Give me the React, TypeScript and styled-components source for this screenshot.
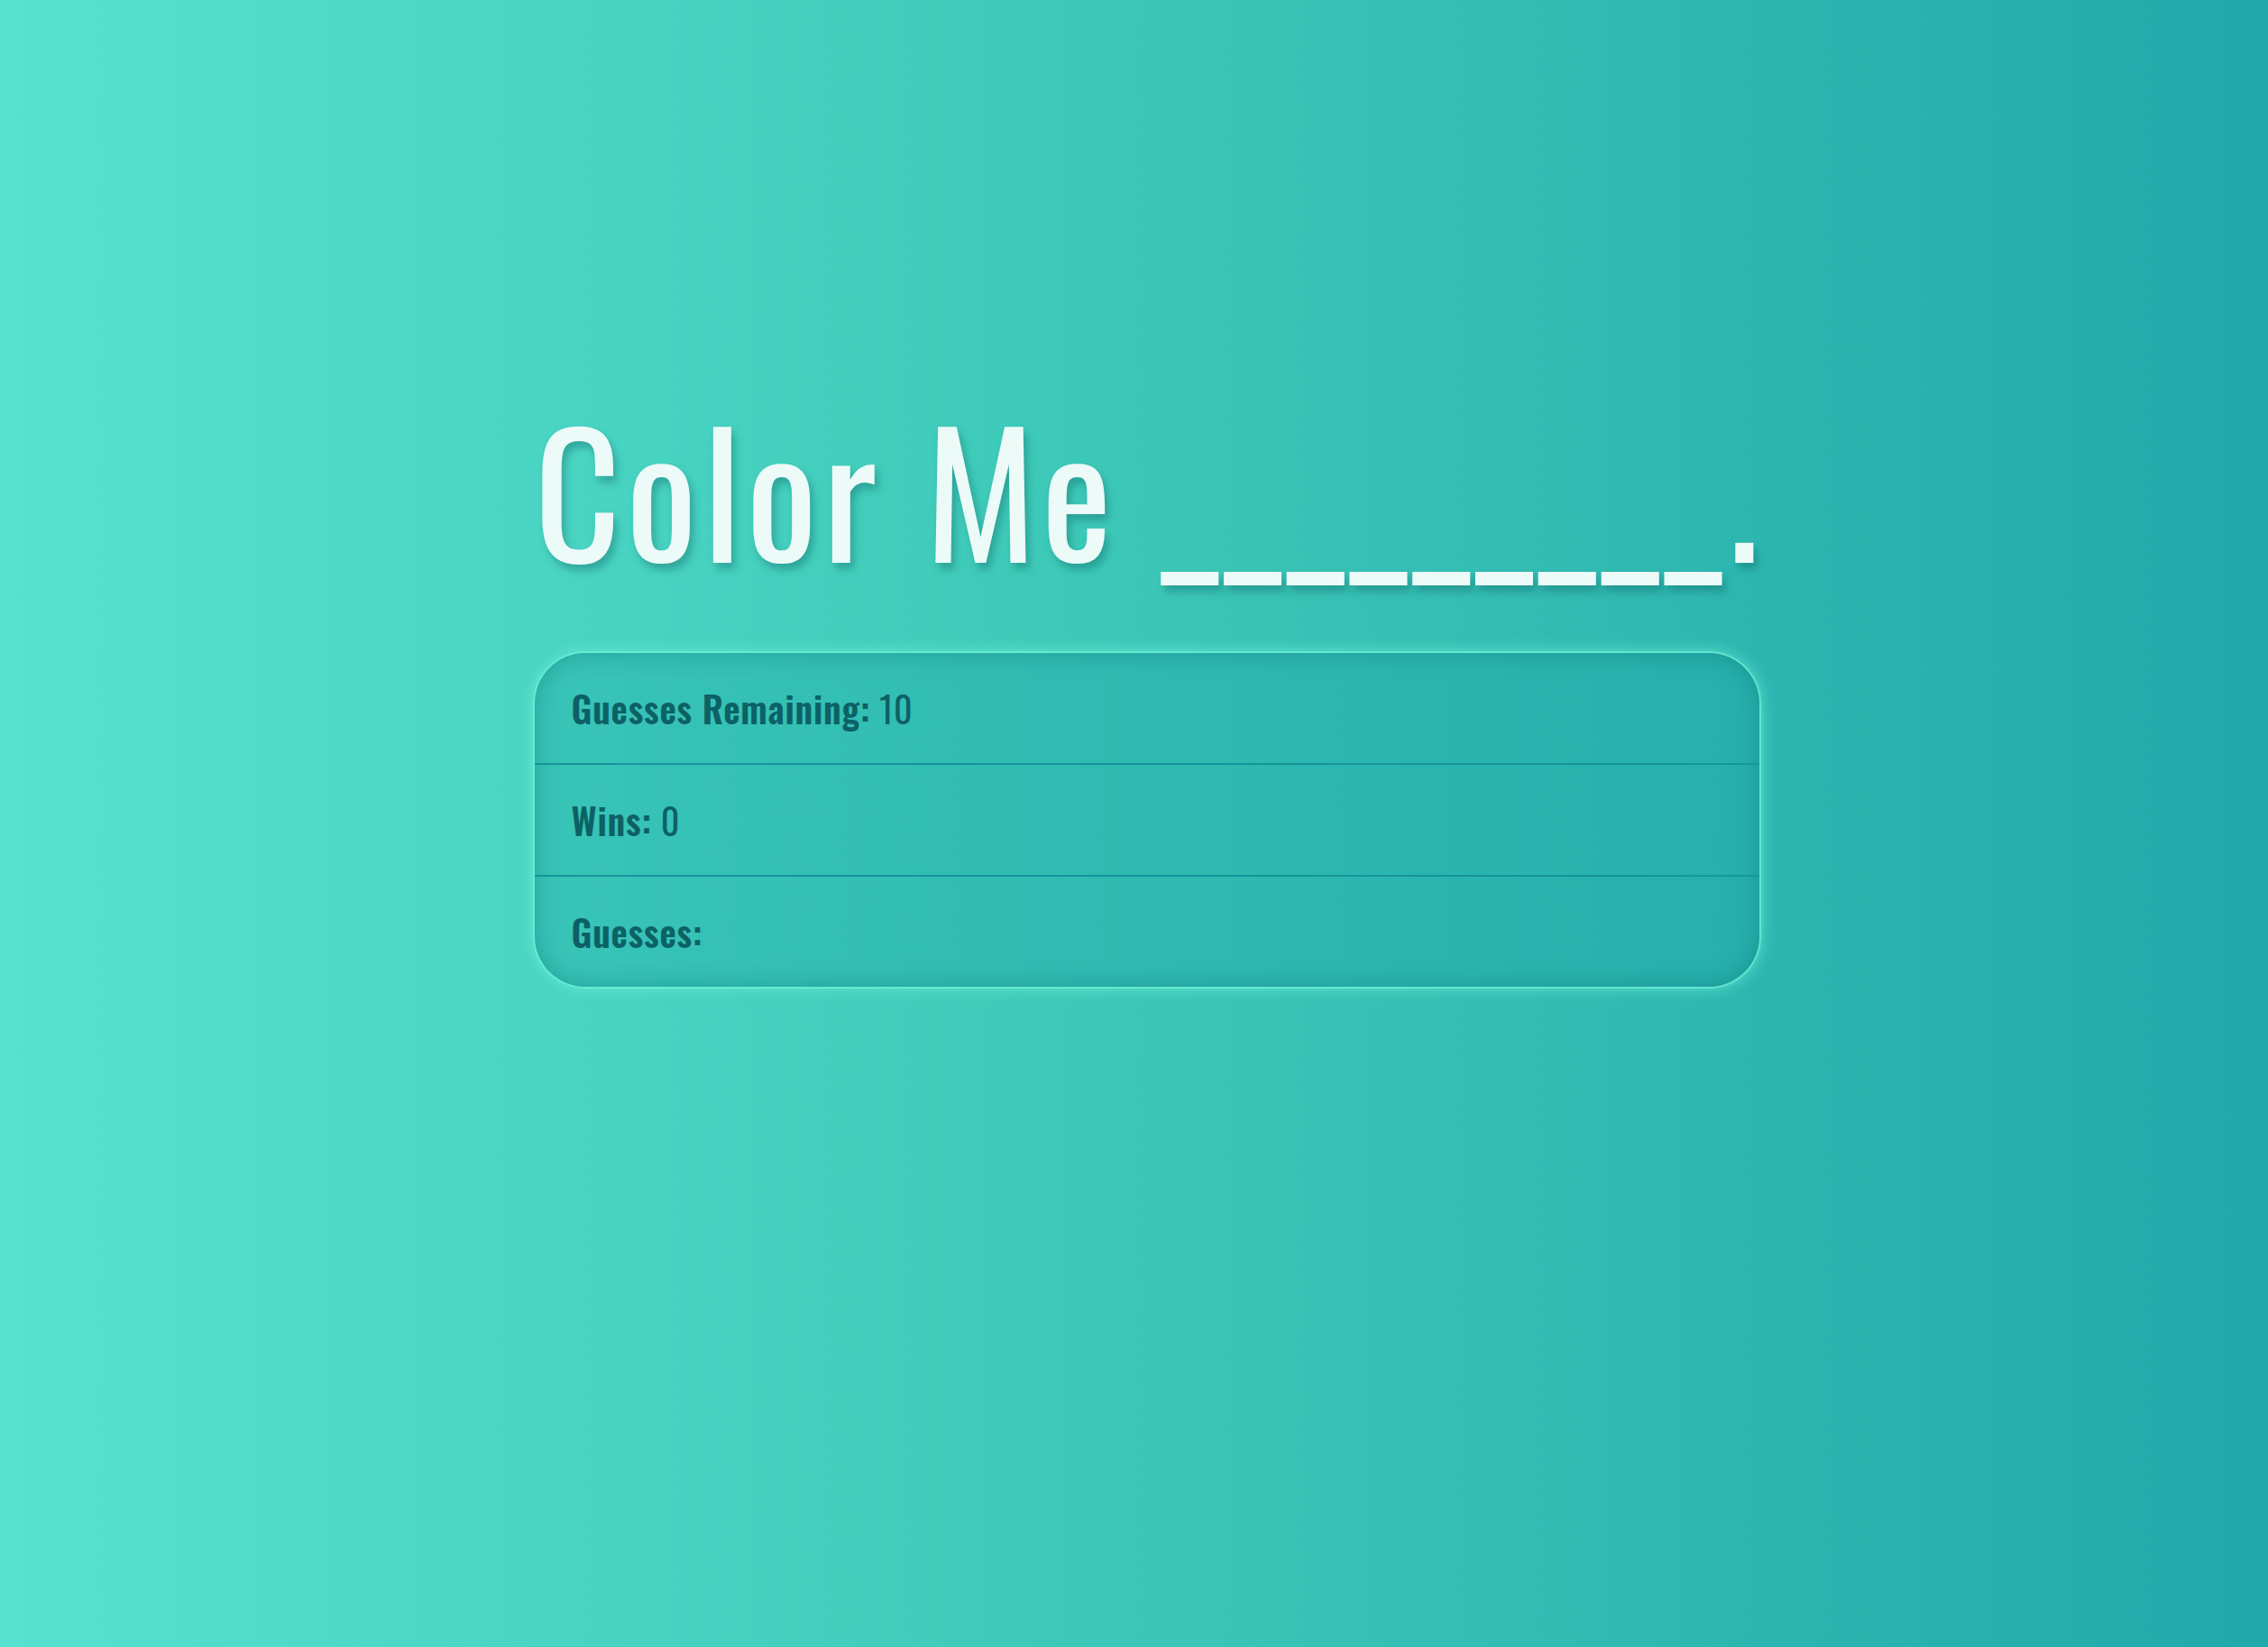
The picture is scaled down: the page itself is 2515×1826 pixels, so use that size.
import React from "react";
import styled, { createGlobalStyle } from "styled-components";

const GlobalStyle = createGlobalStyle`
  html, body { margin: 0; padding: 0; }
  body {
    font-family: 'Oswald', 'Roboto Condensed', 'Liberation Sans', sans-serif;
    background: #3cc4bc;
  }
`;

const Page = styled.main`
  min-height: 100vh;
  box-sizing: border-box;
  padding-top: 447px;
  background: linear-gradient(to right, #57e1cf 0%, #3ecab9 45%, #21a8aa 100%);
`;

const Container = styled.div`
  width: 1358px;
  margin-left: calc(50% - 665px);
`;

const Title = styled.h1`
  margin: 0;
  font-family: 'Oswald', 'Roboto Condensed', sans-serif;
  font-size: 186px;
  font-weight: 400;
  line-height: 1;
  letter-spacing: 5.8px;
  color: #ecfaf8;
  white-space: nowrap;
  text-shadow: 4px 7px 8px rgba(10, 90, 90, 0.35);
`;

const Card = styled.section`
  margin-top: 91px;
  border-radius: 56px;
  overflow: hidden;
  background: linear-gradient(to right, #38c4b7, #26afac);
  box-shadow:
    inset 0 0 26px rgba(10, 110, 110, 0.4),
    0 0 0 2px rgba(110, 240, 214, 0.7),
    0 0 18px rgba(110, 245, 220, 0.85);
`;

const Row = styled.div<{ $last?: boolean }>`
  height: 122px;
  display: flex;
  align-items: center;
  padding-left: 41px;
  border-bottom: ${(p) => (p.$last ? "none" : "2px solid #15949a")};
  font-size: 40px;
  letter-spacing: 0.8px;
  color: #0c6165;
`;

const Label = styled.span`
  font-weight: 600;
  margin-right: 10px;
`;

const Value = styled.span`
  font-weight: 400;
`;

const stats = [
  { label: "Guesses Remaining:", value: "10" },
  { label: "Wins:", value: "0" },
  { label: "Guesses:", value: "" },
];

export default function App() {
  return (
    <>
      <GlobalStyle />
      <Page>
        <Container>
          <Title>Color Me _________.</Title>
          <Card>
            {stats.map((s, i) => (
              <Row key={s.label} $last={i === stats.length - 1}>
                <Label>{s.label}</Label>
                <Value>{s.value}</Value>
              </Row>
            ))}
          </Card>
        </Container>
      </Page>
    </>
  );
}
